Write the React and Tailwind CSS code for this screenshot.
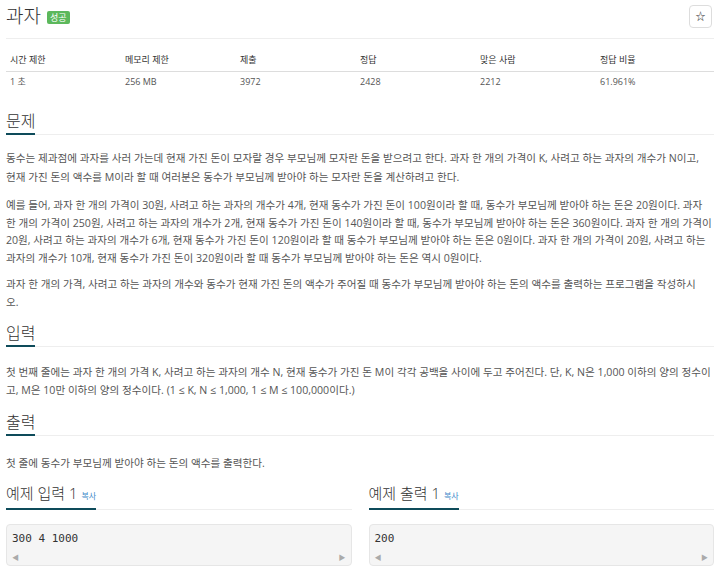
import React from 'react'

const font = { fontFamily: '"Open Sans", "Noto Sans CJK KR", sans-serif' }

const stats = [
  { label: '시간 제한', value: '1 초', w: 'w-[115px]' },
  { label: '메모리 제한', value: '256 MB', w: 'w-[115px]' },
  { label: '제출', value: '3972', w: 'w-[120px]' },
  { label: '정답', value: '2428', w: 'w-[120px]' },
  { label: '맞은 사람', value: '2212', w: 'w-[120px]' },
  { label: '정답 비율', value: '61.961%', w: 'flex-1' }
]

const Heading = ({ children, className = '' }) => (
  <div className={`flex items-end border-b border-[#eee] ${className}`}>
    <h2 className="border-b-2 border-[#0e4b5a] -mb-px pb-[1px] text-[16px] leading-[22px] font-light text-[#333]">
      {children}
    </h2>
  </div>
)

const SampleBox = ({ title, text }) => (
  <div className="flex-1">
    <div className="flex items-end border-b border-[#eee]">
      <h2 className="border-b-2 border-[#0e4b5a] -mb-px pb-[1px] text-[15px] leading-[22px] font-light text-[#333]">
        {title} <span className="text-[8px] font-normal text-[#428bca]">복사</span>
      </h2>
    </div>
    <div className="mt-[14px] h-[42px] border border-[#e6e6e6] bg-[#f5f5f5] rounded-sm flex flex-col">
      <pre className="px-[5px] pt-[6px] text-[11px] leading-[16px] text-[#333]" style={{ fontFamily: '"DejaVu Sans Mono", monospace' }}>{text}</pre>
      <div className="mt-auto flex justify-between px-[5px] pb-[2px] text-[7px] text-[#aaa]">
        <span>◀</span>
        <span>▶</span>
      </div>
    </div>
  </div>
)

export default function App() {
  return (
    <div className="w-[720px] h-[573px] overflow-hidden bg-white px-[6px] text-[#555]" style={font}>
      {/* title */}
      <div className="flex items-center justify-between pt-[4px] pb-[10px] border-b border-[#eee]">
        <div className="flex items-center gap-[6px]">
          <h1 className="text-[19px] leading-[24px] font-light text-[#333]">과자</h1>
          <span className="mt-[3px] bg-[#5cb85c] text-white text-[9px] leading-[13px] px-[3px] rounded-[2px]">성공</span>
        </div>
        <button className="w-[23px] h-[23px] mr-[2px] border border-[#ddd] rounded-sm bg-white text-[10px] text-[#333] flex items-center justify-center">☆</button>
      </div>

      {/* stats table */}
      <div className="mt-[14px] flex border-b border-[#ddd] pb-[4px]">
        {stats.map((s, i) => (
          <div key={i} className={`${s.w} pl-[4px] text-[9px] leading-[14px] text-[#333]`}>{s.label}</div>
        ))}
      </div>
      <div className="flex pt-[3px]">
        {stats.map((s, i) => (
          <div key={i} className={`${s.w} pl-[4px] text-[9px] leading-[14px] text-[#555]`}>{s.value}</div>
        ))}
      </div>

      {/* 문제 */}
      <Heading className="mt-[21px]">문제</Heading>
      <div className="mt-[14px] text-[10.6px] leading-[18.5px]">
        <p className="pr-[8px]">동수는 제과점에 과자를 사러 가는데 현재 가진 돈이 모자랄 경우 부모님께 모자란 돈을 받으려고 한다. 과자 한 개의 가격이 K, 사려고 하는 과자의 개수가 N이고, 현재 가진 돈의 액수를 M이라 할 때 여러분은 동수가 부모님께 받아야 하는 모자란 돈을 계산하려고 한다.</p>
        <p className="mt-[11px] leading-[17.7px]">예를 들어, 과자 한 개의 가격이 30원, 사려고 하는 과자의 개수가 4개, 현재 동수가 가진 돈이 100원이라 할 때, 동수가 부모님께 받아야 하는 돈은 20원이다. 과자 한 개의 가격이 250원, 사려고 하는 과자의 개수가 2개, 현재 동수가 가진 돈이 140원이라 할 때, 동수가 부모님께 받아야 하는 돈은 360원이다. 과자 한 개의 가격이 20원, 사려고 하는 과자의 개수가 6개, 현재 동수가 가진 돈이 120원이라 할 때 동수가 부모님께 받아야 하는 돈은 0원이다. 과자 한 개의 가격이 20원, 사려고 하는 과자의 개수가 10개, 현재 동수가 가진 돈이 320원이라 할 때 동수가 부모님께 받아야 하는 돈은 역시 0원이다.</p>
        <p className="mt-[7px] pr-[8px] leading-[18px]">과자 한 개의 가격, 사려고 하는 과자의 개수와 동수가 현재 가진 돈의 액수가 주어질 때 동수가 부모님께 받아야 하는 돈의 액수를 출력하는 프로그램을 작성하시오.</p>
      </div>

      {/* 입력 */}
      <Heading className="mt-[11px]">입력</Heading>
      <div className="mt-[16px] text-[10.6px] leading-[18.5px]">
        <p>첫 번째 줄에는 과자 한 개의 가격 K, 사려고 하는 과자의 개수 N, 현재 동수가 가진 돈 M이 각각 공백을 사이에 두고 주어진다. 단, K, N은 1,000 이하의 양의 정수이고, M은 10만 이하의 양의 정수이다. (1 ≤ K, N ≤ 1,000, 1 ≤ M ≤ 100,000이다.)</p>
      </div>

      {/* 출력 */}
      <Heading className="mt-[11px]">출력</Heading>
      <div className="mt-[18px] text-[10.6px] leading-[18.5px]">
        <p>첫 줄에 동수가 부모님께 받아야 하는 돈의 액수를 출력한다.</p>
      </div>

      {/* 예제 */}
      <div className="mt-[10px] flex gap-[17px]">
        <SampleBox title="예제 입력 1" text="300 4 1000" />
        <SampleBox title="예제 출력 1" text="200" />
      </div>
    </div>
  )
}
